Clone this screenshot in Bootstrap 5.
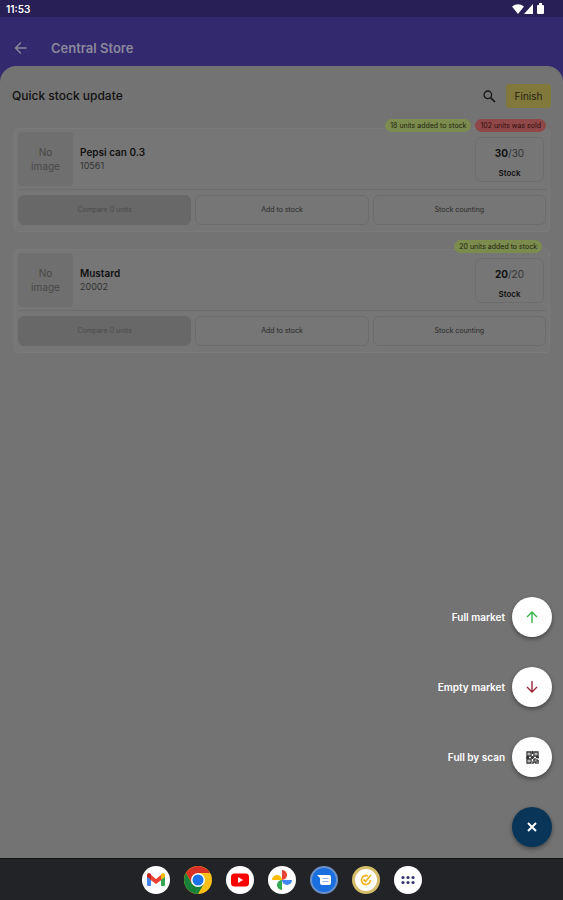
<!DOCTYPE html>
<html lang="en">
<head>
<meta charset="utf-8">
<meta name="viewport" content="width=device-width, initial-scale=1">
<title>Central Store</title>
<link href="https://cdn.jsdelivr.net/npm/bootstrap@5.3.0/dist/css/bootstrap.min.css" rel="stylesheet">
<style>
body{font-family:Inter,"Open Sans",sans-serif;background:#33296f;color:#171717;font-size:12px;line-height:16px}
.status-bar{background:#271f55;height:17px;color:#fff;font-size:10px;font-weight:600;padding:0 18px 0 6px}
.app-header{height:49px;padding:19px 14px 0;color:#8b889b}
.app-header h1{font-size:13px;line-height:16px;font-weight:600;margin:0 0 0 24px}
.plain{border:0;background:none;padding:0;color:inherit;line-height:0}
.sheet{background:#737373;border-radius:16px 16px 0 0;padding:18px 12px}
.sheet h2{font-size:12px;line-height:16px;font-weight:500;margin:0;color:#111}
.search{margin-right:10px}
.finish{background:#81783b;color:#25230f;border:0;border-radius:3px;width:45px;height:24px;padding:0;font-size:10px}
.stock-card{background:#767676;border:1px solid #7a7a7a;border-radius:4px;padding:3px 3px 6px;margin:20px 1px 0 2px}
.stock-card + .stock-card{margin-top:17px}
.notes{top:-10px;right:3px;gap:4px}
.note{border-radius:7px;height:13px;line-height:13px;font-size:7px;padding:0 5px}
.added{background:#7c8b4e;color:#20250f}
.sold{background:#8f4747;color:#300d0d}
.stock-card + .stock-card .notes{right:7px}
.thumb{width:55px;height:54px;background:#6f6f6f;border-radius:4px;color:#484848;font-size:10px;line-height:14px}
.product{padding:13px 0 0 7px}
.product h3{font-size:10px;line-height:14px;font-weight:600;margin:0;color:#111}
.product p{font-size:9px;line-height:14px;margin:0;color:#333}
.count{width:69px;height:45px;border:1px solid #6d6d6d;border-radius:6px;font-size:10px;line-height:14px;margin:5px 2px 0 0;padding-top:8px;color:#333}
.count b{font-weight:700;color:#111}
.count small{display:block;font-size:8px;line-height:12px;font-weight:600;color:#111;margin-top:7px}
.rule{border-top:1px solid #6c6c6c;margin:3px 0 5px}
.actions{gap:4px}
.actions button{height:30px;border:1px solid #6c6c6c;border-radius:6px;background:#767676;color:#292929;font-size:7px;padding:0}
.actions button:disabled{background:#686868;border-color:#686868;color:#4b4b4b}
.speed{right:11px;bottom:11px;gap:30px;color:#fff;font-size:10px;font-weight:600}
.speed button{background:none;border:0;color:inherit;font-weight:600;padding:0;gap:7px}
.disc{width:40px;height:40px;border-radius:50%;background:#fff;box-shadow:0 2px 4px #0006}
.disc.close-disc{background:#083558}
.dock{height:42px;background:#222327;border-top:1px solid #111;gap:14px}
.dock button{width:28px;height:28px}
</style>
<script src="https://cdn.jsdelivr.net/npm/bootstrap@5.3.0/dist/js/bootstrap.bundle.min.js"></script>
</head>
<body class="d-flex flex-column min-vh-100">
<div class="status-bar d-flex align-items-center justify-content-between">
  <time>11:53</time>
  <svg width="33" height="12" viewBox="0 0 33 12" fill="#fff" aria-hidden="true"><path d="M0 3.5Q6-1 12 3.5L6 11ZM12 11 21 1V11ZM26 2h1V0h3v2h1q1 0 1 1v7q0 1-1 1h-5q-1 0-1-1V3q0-1 1-1Z"/></svg>
</div>
<header class="app-header">
  <div class="d-flex align-items-center pt-1">
    <button class="plain" aria-label="Back"><svg width="13" height="14" viewBox="0 0 13 14" fill="none" stroke="currentColor" stroke-width="1.4"><path d="M12.500 7H1.500M7 1.500 1.500 7 7 12.500"/></svg></button>
    <h1>Central Store</h1>
  </div>
</header>
<main class="sheet flex-grow-1 position-relative">
  <div class="d-flex align-items-center">
    <h2 class="flex-grow-1">Quick stock update</h2>
    <button class="plain search" aria-label="Search"><svg width="13" height="13" viewBox="0 0 13 13" fill="none" stroke="#171717"><circle cx="4.800" cy="4.800" r="3.800" stroke-width="1.300"/><path d="m7.800 7.800 4.200 4.200" stroke-width="1.700"/></svg></button>
    <button class="finish">Finish</button>
  </div>
  <article class="stock-card position-relative">
    <div class="notes position-absolute d-flex"><span class="note added">18 units added to stock</span><span class="note sold">102 units was sold</span></div>
    <div class="d-flex">
      <div class="thumb d-flex align-items-center justify-content-center text-center">No<br>image</div>
      <div class="product flex-grow-1"><h3>Pepsi can 0.3</h3><p>10561</p></div>
      <div class="count text-center"><b>30</b>/30<small>Stock</small></div>
    </div>
    <div class="rule"></div>
    <div class="actions d-flex"><button class="flex-fill w-100" disabled>Compare 0 units</button><button class="flex-fill w-100">Add to stock</button><button class="flex-fill w-100">Stock counting</button></div>
  </article>
  <article class="stock-card position-relative">
    <div class="notes position-absolute d-flex"><span class="note added">20 units added to stock</span></div>
    <div class="d-flex">
      <div class="thumb d-flex align-items-center justify-content-center text-center">No<br>image</div>
      <div class="product flex-grow-1"><h3>Mustard</h3><p>20002</p></div>
      <div class="count text-center"><b>20</b>/20<small>Stock</small></div>
    </div>
    <div class="rule"></div>
    <div class="actions d-flex"><button class="flex-fill w-100" disabled>Compare 0 units</button><button class="flex-fill w-100">Add to stock</button><button class="flex-fill w-100">Stock counting</button></div>
  </article>
  <div class="speed position-absolute d-flex flex-column align-items-end">
    <button class="d-flex align-items-center">Full market<span class="disc d-flex align-items-center justify-content-center"><svg width="12" height="12" viewBox="0 0 12 12" fill="none" stroke="#35b545" stroke-width="1.400"><path d="M6 12V1M1 6l5-5 5 5"/></svg></span></button>
    <button class="d-flex align-items-center">Empty market<span class="disc d-flex align-items-center justify-content-center"><svg width="12" height="12" viewBox="0 0 12 12" fill="none" stroke="#9b2638" stroke-width="1.400"><path d="M6 0v11M1 6l5 5 5-5"/></svg></span></button>
    <button class="d-flex align-items-center">Full by scan<span class="disc d-flex align-items-center justify-content-center"><svg width="13" height="13" viewBox="0 0 13 13" fill="none" stroke="#333" stroke-width="1.300"><path d="M1 1h4v4H1zM8 1h4v4H8zM1 8h4v4H1zM6.500 0v3M6.500 5v3M0 6.500h3M5 6.500h3M10 6.500h3M7 9h2V7M11 8v2h2M7 13v-2h3v2M12 11v2"/><path d="M2.500 3h1M9.500 3h1M2.500 10h1"/></svg></span></button>
    <button class="d-flex" aria-label="Close menu"><span class="disc close-disc d-flex align-items-center justify-content-center"><svg width="10" height="10" viewBox="0 0 10 10" stroke="#fff" stroke-width="2"><path d="m1 1 8 8M9 1 1 9"/></svg></span></button>
  </div>
</main>
<nav class="dock d-flex align-items-center justify-content-center" aria-label="Apps">
  <button class="plain" aria-label="Gmail"><svg viewBox="0 0 28 28"><circle cx="14" cy="14" r="14" fill="#fff"/><path fill="#4285f4" d="M5 10.500 9 13v7H6q-1 0-1-1Z"/><path fill="#34a853" d="M23 10.500 19 13v7h3q1 0 1-1Z"/><path fill="#ea4335" d="m8 8 6 5 6-5v5.500l-6 4.500-6-4.500Z"/><path fill="#c5221f" d="M5 10V9q0-2 2-2l2 1v5.500L5 11Z"/><path fill="#fbbc04" d="M23 10V9q0-2-2-2l-2 1v5.500l4-2.500Z"/></svg></button>
  <button class="plain" aria-label="Chrome"><svg viewBox="0 0 28 28"><circle cx="14" cy="14" r="14" fill="#fbc116"/><path fill="#d93025" d="M1.880 7A14 14 0 0 1 26.120 7H14L8 17.500Z"/><path fill="#188038" d="M1.880 7A14 14 0 0 0 14 28l6-10.500H8Z"/><circle cx="14" cy="14" r="7" fill="#fff"/><circle cx="14" cy="14" r="5.500" fill="#1a73e8"/></svg></button>
  <button class="plain" aria-label="YouTube"><svg viewBox="0 0 28 28"><circle cx="14" cy="14" r="14" fill="#fff"/><rect x="5" y="7.500" width="18" height="13" rx="3.500" fill="#f00"/><path fill="#fff" d="m12 11 5 3-5 3Z"/></svg></button>
  <button class="plain" aria-label="Photos"><svg viewBox="0 0 28 28"><circle cx="14" cy="14" r="14" fill="#fff"/><path fill="#ea4335" d="M14 4a5 5 0 0 1 0 10Z"/><path fill="#4285f4" d="M24 14a5 5 0 0 1-10 0Z"/><path fill="#34a853" d="M14 24a5 5 0 0 1 0-10Z"/><path fill="#fbbc04" d="M4 14a5 5 0 0 1 10 0Z"/></svg></button>
  <button class="plain" aria-label="Messages"><svg viewBox="0 0 28 28"><circle cx="14" cy="14" r="13" fill="#1a6fe0" stroke="#6d91c8" stroke-width="2"/><path fill="#fff" d="M7 9h12q2 0 2 2v6q0 2-2 2h-7q-2 0-2-2v-5Z"/><path stroke="#8cb6f5" d="M12.500 12.500h6M12.500 15.500h6"/></svg></button>
  <button class="plain" aria-label="Tasks"><svg viewBox="0 0 28 28"><circle cx="14" cy="14" r="12.500" fill="#fff" stroke="#d5bd6b" stroke-width="3"/><path fill="none" stroke="#efb62c" stroke-width="1.800" d="M16 10a4.500 4.500 0 1 0 2.500 4M11.500 13.500l2 2L19 9"/></svg></button>
  <button class="plain" aria-label="All apps"><svg viewBox="0 0 28 28"><circle cx="14" cy="14" r="14" fill="#fff"/><g fill="#34366c"><circle cx="9" cy="11.500" r="1.600"/><circle cx="14" cy="11.500" r="1.600"/><circle cx="19" cy="11.500" r="1.600"/><circle cx="9" cy="16.500" r="1.600"/><circle cx="14" cy="16.500" r="1.600"/><circle cx="19" cy="16.500" r="1.600"/></g></svg></button>
</nav>
</body>
</html>
